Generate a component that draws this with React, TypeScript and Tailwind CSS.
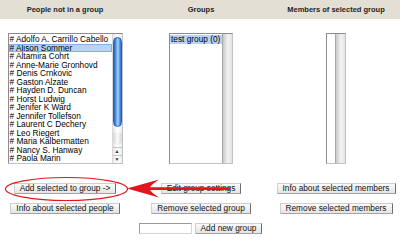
const people = [
  'Adolfo A. Carrillo Cabello',
  'Alison Sommer',
  'Altamira Cohrt',
  'Anne-Marie Gronhovd',
  'Denis Crnkovic',
  'Gaston Alzate',
  'Hayden D. Duncan',
  'Horst Ludwig',
  'Jenifer K Ward',
  'Jennifer Tollefson',
  'Laurent C Dechery',
  'Leo Riegert',
  'Maria Kalbermatten',
  'Nancy S. Hanway',
  'Paola Marin',
];

function MacButton({ children }: { children: React.ReactNode }) {
  return (
    <button className="h-[11px] px-[5px] flex items-center bg-[linear-gradient(to_bottom,#fbfbfb,#e4e4e4)] border border-[#cfcfcf] border-r-[#6e6e6e] border-b-[#a3a3a3] text-[8.3px] leading-none text-[#111] whitespace-nowrap">
      {children}
    </button>
  );
}

// empty aqua scrollbar track
function EmptyTrack() {
  return (
    <div className="w-[10px] h-full border-l border-[#a8a8a8] bg-[linear-gradient(to_right,#c9c9c9,#f3f3f3_55%,#e2e2e2)]" />
  );
}

function PeopleScrollbar() {
  return (
    <div className="w-[10px] h-full flex flex-col border-l border-[#d8d8d8] bg-[linear-gradient(to_right,#e6e6e6,#ffffff_50%,#ececec)]">
      <div className="mt-[3px] mx-auto w-[9px] h-[90px] rounded-full bg-[linear-gradient(to_right,#1f5fc4,#86bdf4_45%,#a9d2fa_55%,#2a68cc)] border border-[#2a5fb5]" />
      <div className="mx-auto mt-[6px] w-[9px] h-[12px] rounded-b-full bg-[linear-gradient(to_right,#d6d6d6,#fafafa,#d6d6d6)]" />
      <div className="flex-1" />
      <div className="h-[8px] flex items-center justify-center border-t border-[#c4c4c4] text-[5px] leading-none text-[#333]">▲</div>
      <div className="h-[8px] flex items-center justify-center border-t border-[#c4c4c4] text-[5px] leading-none text-[#333]">▼</div>
    </div>
  );
}

export default function App() {
  return (
    <div className="relative w-[400px] h-[242px] bg-white overflow-hidden font-['Liberation_Sans',Arial,sans-serif]">
      {/* header band */}
      <div className="grid grid-cols-[130px_142px_128px] h-[19px] bg-[#e3dfd5] items-center text-center text-[7.5px] font-bold text-[#222]">
        <div>People not in a group</div>
        <div>Groups</div>
        <div>Members of selected group</div>
      </div>

      <div className="grid grid-cols-[130px_142px_128px] pt-[14px]">
        {/* people column */}
        <div className="flex flex-col items-center">
          <div className="flex w-[115px] h-[131px] border border-[#8c8c8c] border-r-[#c2c2c2] border-b-[#c2c2c2] bg-white">
            <ul className="flex-1 pt-[1px] text-[8.3px] leading-[8.5px] text-black">
              {people.map((p) => (
                <li
                  key={p}
                  className={
                    p === 'Alison Sommer'
                      ? 'pl-[1px] whitespace-nowrap bg-[#b9d3f6] outline outline-1 -outline-offset-1 outline-[#86ade6]'
                      : 'pl-[1px] whitespace-nowrap'
                  }
                >
                  # {p}
                </li>
              ))}
            </ul>
            <PeopleScrollbar />
          </div>
          <div className="mt-[19px]">
            <MacButton>Add selected to group -&gt;</MacButton>
          </div>
          <div className="mt-[9px]">
            <MacButton>Info about selected people</MacButton>
          </div>
        </div>

        {/* groups column */}
        <div className="flex flex-col items-center">
          <div className="flex w-[64px] h-[131px] border border-[#8c8c8c] border-r-[#c2c2c2] border-b-[#c2c2c2] bg-white">
            <div className="flex-1 pt-[1px] text-[8.3px] leading-[8.5px]">
              <div className="pl-[1px] bg-[#b9d3f6] whitespace-nowrap">test group (0)</div>
            </div>
            <EmptyTrack />
          </div>
          <div className="mt-[19px]">
            <MacButton>Edit group settings</MacButton>
          </div>
          <div className="mt-[9px]">
            <MacButton>Remove selected group</MacButton>
          </div>
          <div className="mt-[9px] flex items-center gap-[3px] ml-[-1px]">
            <input className="w-[53px] h-[11px] border border-[#9a9a9a] border-r-[#d6d6d6] border-b-[#d6d6d6] bg-white outline-none" />
            <MacButton>Add new group</MacButton>
          </div>
        </div>

        {/* members column */}
        <div className="flex flex-col items-center">
          <div className="flex w-[20px] h-[131px] border border-[#8c8c8c] border-r-[#c2c2c2] border-b-[#c2c2c2] bg-white">
            <div className="flex-1" />
            <EmptyTrack />
          </div>
          <div className="mt-[19px]">
            <MacButton>Info about selected members</MacButton>
          </div>
          <div className="mt-[9px]">
            <MacButton>Remove selected members</MacButton>
          </div>
        </div>
      </div>

      {/* red annotation drawn over the page */}
      <svg className="absolute left-0 top-0 pointer-events-none" width="400" height="242" viewBox="0 0 400 242">
        <ellipse cx="66.5" cy="189" rx="61" ry="11.5" fill="none" stroke="#e3141c" strokeWidth="1.2" />
        <path
          d="M127 188.5 L159 179.5 Q151 185 150 187.2 L230 187.2 L230 190 L150 190 Q151 192 159 197.5 Z"
          fill="#e3141c"
        />
      </svg>
    </div>
  );
}
